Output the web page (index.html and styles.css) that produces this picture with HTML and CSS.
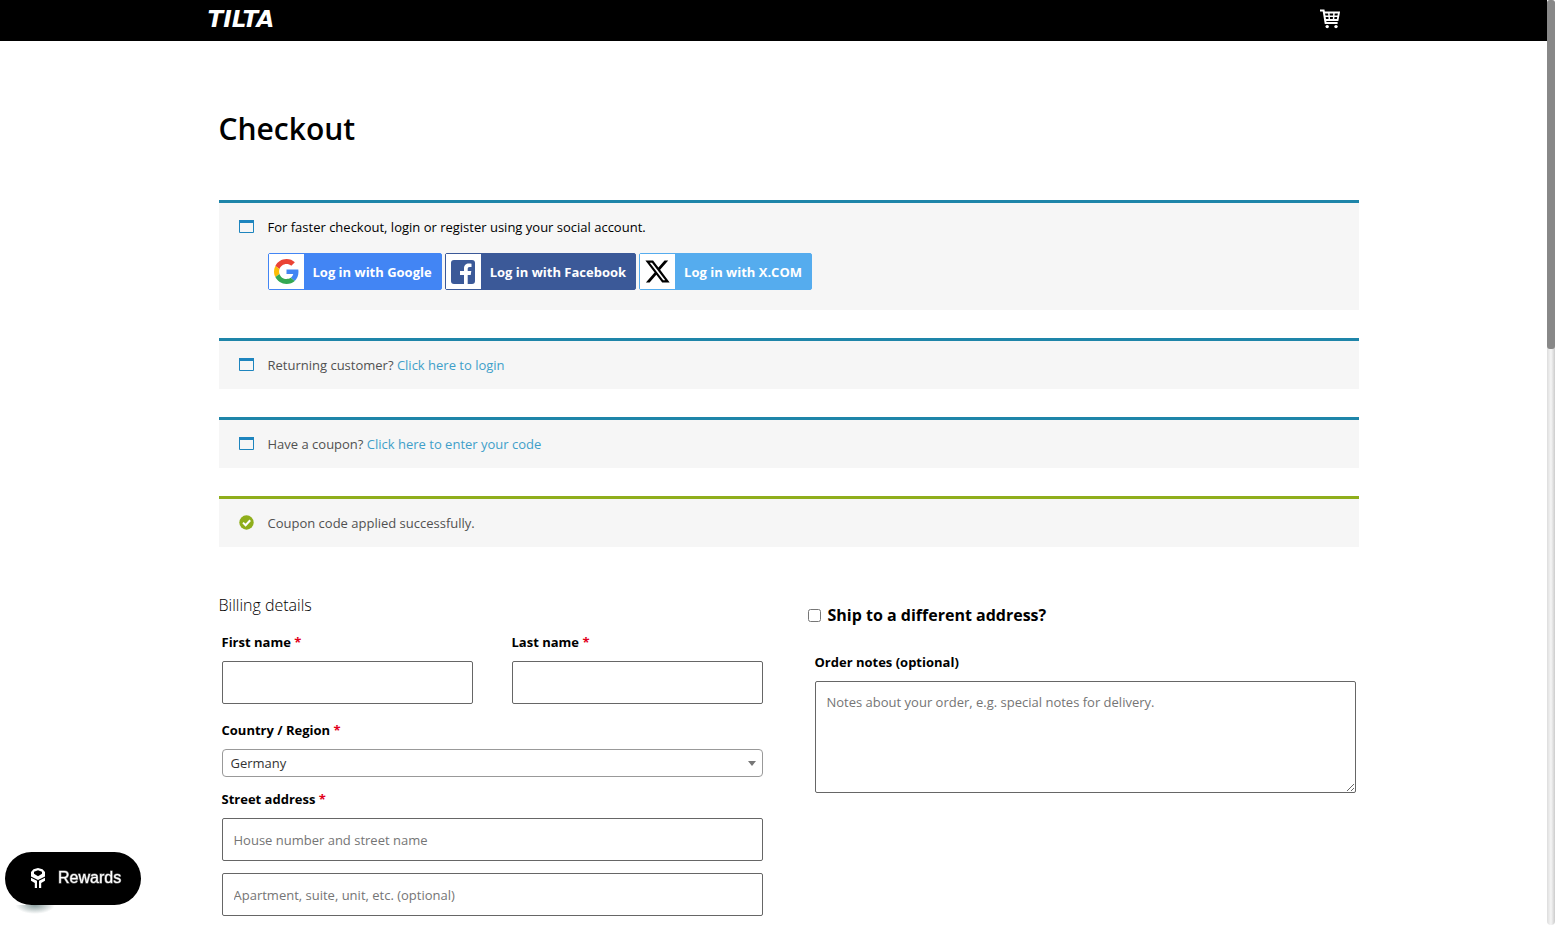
FILE: index.html
```html
<!DOCTYPE html>
<html lang="en">

<head>
    <meta charset="UTF-8" />
    <meta name="viewport" content="width=device-width, initial-scale=1.0" />
    <title>Checkout - Tilta</title>
    <link rel="stylesheet" href="styles.css">
</head>

<body>
    <header class="site-header">
        <div class="header-inner">
            <a href="/" class="logo">TILTA</a>
            <a href="/cart" class="cart-link" aria-label="Cart">
                <svg width="20" height="20" viewBox="0 0 20 20" fill="none" stroke="#fff">
                    <path d="M0 1.5h3.6l2 12.5h12" stroke-width="2" />
                    <path d="M3.8 3.5h15.2l-1.4 7.5H5" stroke-width="1.8" />
                    <path d="M4.4 7.2h14M8.8 3.5l.6 7.5M14 3.5l-.5 7.5" stroke-width="1.5" />
                    <circle cx="7.2" cy="17.6" r="1.7" fill="#fff" stroke="none" />
                    <circle cx="16" cy="17.6" r="1.7" fill="#fff" stroke="none" />
                </svg>
            </a>
        </div>
    </header>

    <main class="page">
        <h1>Checkout</h1>

        <div class="notice notice-social">
            <svg class="notice-icon" width="15" height="15" viewBox="0 0 15 15">
                <path d="M.5 1.5h14v12H.5z" fill="none" stroke="#1e85be" />
                <path d="M0 1h15v3H0z" fill="#1e85be" />
            </svg>
            <div>
                <p>For faster checkout, login or register using your social account.</p>
                <div class="social-buttons">
                    <a href="#google" class="social google">
                        <span class="social-icon">
                            <svg width="25" height="25" viewBox="0 0 48 48">
                                <path fill="#EA4335" d="M24 9.5c3.54 0 6.71 1.22 9.21 3.6l6.85-6.85C35.9 2.38 30.47 0 24 0 14.62 0 6.51 5.38 2.56 13.22l7.98 6.19C12.43 13.72 17.74 9.5 24 9.5z" />
                                <path fill="#4285F4" d="M46.98 24.55c0-1.57-.15-3.09-.38-4.55H24v9.02h12.94c-.58 2.96-2.26 5.48-4.78 7.18l7.73 6c4.51-4.18 7.09-10.36 7.09-17.65z" />
                                <path fill="#FBBC05" d="M10.53 28.59c-.48-1.45-.76-2.99-.76-4.59s.27-3.14.76-4.59l-7.98-6.19C.92 16.46 0 20.12 0 24c0 3.88.92 7.54 2.56 10.78l7.97-6.19z" />
                                <path fill="#34A853" d="M24 48c6.48 0 11.93-2.13 15.89-5.81l-7.73-6c-2.15 1.45-4.92 2.3-8.16 2.3-6.26 0-11.57-4.22-13.47-9.91l-7.98 6.19C6.51 42.62 14.62 48 24 48z" />
                            </svg>
                        </span>
                        Log in with Google
                    </a>
                    <a href="#facebook" class="social facebook">
                        <span class="social-icon">
                            <svg width="26" height="26" viewBox="0 0 26 26">
                                <rect x="1" y="1" width="24" height="24" rx="3" fill="#3b5998" />
                                <path fill="#fff" d="M14 25v-9h-4v-4h4V9.5C14 6 16 4.500 18.800 4.500c1 0 2 .1 2.700.2V8h-1.800c-1.600 0-2 .8-2 2v2h3.600l-.6 4h-3v9z" />
                            </svg>
                        </span>
                        Log in with Facebook
                    </a>
                    <a href="#x" class="social xcom">
                        <span class="social-icon">
                            <svg width="27" height="27" viewBox="0 0 24 24">
                                <path d="M18.244 2.250h3.308l-7.227 8.260 8.502 11.240H16.170l-5.214-6.817L4.990 21.750H1.680l7.730-8.835L1.254 2.250H8.080l4.713 6.231zm-1.161 17.520h1.833L7.084 4.126H5.117z" />
                            </svg>
                        </span>
                        Log in with X.COM
                    </a>
                </div>
            </div>
        </div>

        <div class="notice">
            <svg class="notice-icon" width="15" height="15" viewBox="0 0 15 15">
                <path d="M.5 1.5h14v12H.5z" fill="none" stroke="#1e85be" />
                <path d="M0 1h15v3H0z" fill="#1e85be" />
            </svg>
            <p>Returning customer? <a href="#login">Click here to login</a></p>
        </div>

        <div class="notice">
            <svg class="notice-icon" width="15" height="15" viewBox="0 0 15 15">
                <path d="M.5 1.5h14v12H.5z" fill="none" stroke="#1e85be" />
                <path d="M0 1h15v3H0z" fill="#1e85be" />
            </svg>
            <p>Have a coupon? <a href="#coupon">Click here to enter your code</a></p>
        </div>

        <div class="notice notice-success">
            <svg class="notice-icon" width="15" height="15" viewBox="0 0 15 15">
                <circle cx="7.5" cy="7.5" r="7.2" fill="#8fae1b" />
                <path d="M4 7.6l2.600 2.600 4.600-5" fill="none" stroke="#fff" stroke-width="2" />
            </svg>
            <p>Coupon code applied successfully.</p>
        </div>

        <form class="checkout">
            <div class="billing">
                <h3>Billing details</h3>
                <div class="name-row">
                    <div class="form-row">
                        <label for="first-name">First name <span class="required">*</span></label>
                        <input type="text" id="first-name">
                    </div>
                    <div class="form-row">
                        <label for="last-name">Last name <span class="required">*</span></label>
                        <input type="text" id="last-name">
                    </div>
                </div>
                <div class="form-row select-row">
                    <label for="country">Country / Region <span class="required">*</span></label>
                    <div class="select-wrap">
                        <select id="country">
                            <option>Germany</option>
                        </select>
                    </div>
                </div>
                <div class="form-row">
                    <label for="street">Street address <span class="required">*</span></label>
                    <input type="text" id="street" placeholder="House number and street name">
                    <input type="text" id="street2" aria-label="Apartment" placeholder="Apartment, suite, unit, etc. (optional)">
                </div>
            </div>

            <div class="shipping">
                <h3 class="ship-toggle">
                    <input type="checkbox" id="ship-different">
                    <label for="ship-different">Ship to a different address?</label>
                </h3>
                <div class="form-row">
                    <label for="notes">Order notes (optional)</label>
                    <textarea id="notes" placeholder="Notes about your order, e.g. special notes for delivery."></textarea>
                </div>
            </div>
        </form>
    </main>

    <button type="button" class="rewards">
        <svg width="16" height="20" viewBox="0 0 16 20">
            <path fill="#fff" fill-rule="evenodd" d="M8 0l4.500 1.200L15 4v4.500L8 12 1 8.500V4l2.500-2.800zM8 2.200L4 3.800v2L8 8.200l4-2.400v-2z" />
            <path fill="#fff" d="M1 9.800l6 3V20H4.800v-5L1 12.800zM15 9.800l-6 3V20h2.200v-5L15 12.800z" />
        </svg>
        Rewards
    </button>

    <div class="scrollbar">
        <div class="scrollbar-thumb"></div>
    </div>
</body>

</html>
```
FILE: styles.css
```css
* {
    box-sizing: border-box;
}

html {
    scrollbar-width: none;
}

body {
    font-family: 'Segoe UI', 'Open Sans', 'Noto Sans', sans-serif;
    font-size: 13px;
    line-height: 24px;
    margin: 0;
    padding-right: 8px;
    background-color: #fff;
    color: #000;
}

a {
    color: #3f9fc9;
    text-decoration: none;
}

p {
    margin: 0;
}

.site-header {
    background-color: #000;
}

.header-inner {
    display: flex;
    justify-content: space-between;
    align-items: center;
    max-width: 1132px;
    height: 41px;
    margin: 0 auto;
    padding-bottom: 4px;
}

.logo {
    color: #fff;
    font-family: 'DejaVu Sans', sans-serif;
    font-size: 23px;
    font-weight: bold;
    font-style: italic;
}

.cart-link {
    display: flex;
}

.page {
    max-width: 1170px;
    margin: 0 auto;
    padding: 68px 0 9px 30px;
}

h1 {
    margin: 0 0 51px;
    font-size: 30px;
    font-weight: 600;
    line-height: 40px;
}

h3 {
    margin: 0;
    font-size: 16px;
    line-height: 24px;
}

.notice {
    display: flex;
    gap: 14px;
    margin-bottom: 28px;
    padding: 12px 20px;
    background-color: #f6f6f6;
    border-top: 3px solid #1e85a9;
    color: #515151;
}

.notice-icon {
    flex: none;
    margin-top: 4px;
}

.notice-social {
    padding-bottom: 20px;
    color: #000;
}

.notice-success {
    margin-bottom: 46px;
    border-top-color: #8fae1b;
}

.social-buttons {
    display: flex;
    flex-wrap: wrap;
    gap: 3px;
    margin-top: 14px;
}

.social {
    display: flex;
    align-items: center;
    gap: 9px;
    height: 37px;
    padding-right: 9px;
    border: 1px solid;
    border-radius: 2px;
    color: #fff;
    font-weight: bold;
}

.social-icon {
    display: flex;
    align-items: center;
    justify-content: center;
    width: 35px;
    height: 35px;
    background-color: #fff;
}

.google {
    background-color: #4285f4;
    border-color: #4285f4;
}

.facebook {
    background-color: #3b5998;
    border-color: #3b5998;
}

.xcom {
    background-color: #55acee;
    border-color: #55acee;
}

/* billing and shipping columns */
.checkout {
    display: grid;
    grid-template-columns: 1fr 1fr;
    gap: 46px;
}

.billing h3 {
    margin-bottom: 13px;
    font-weight: 300;
}

.name-row {
    display: grid;
    grid-template-columns: 1fr 1fr;
    gap: 33px;
}

.form-row {
    margin-bottom: 14px;
    padding: 0 3px;
}

.form-row label {
    display: block;
    margin-bottom: 7px;
    font-weight: bold;
}

.required {
    color: #e2001a;
}

.form-row input,
.form-row textarea {
    display: block;
    width: 100%;
    height: 43px;
    padding: 0 11px;
    border: 1px solid #666;
    border-radius: 2px;
    background-color: #fff;
    font-family: inherit;
    font-size: 13px;
}

.form-row input + input {
    margin-top: 12px;
}

.form-row textarea {
    height: 112px;
    padding: 8px 11px;
    line-height: 24px;
}

::placeholder {
    color: #757575;
}

.select-row {
    margin-bottom: 10px;
}

.select-wrap {
    position: relative;
}

.select-wrap::after {
    content: "";
    position: absolute;
    top: 12px;
    right: 7px;
    border: 4px solid transparent;
    border-top: 5px solid #777;
    border-bottom: 0;
    pointer-events: none;
}

select {
    display: block;
    width: 100%;
    height: 28px;
    padding: 0 8px;
    appearance: none;
    border: 1px solid #999;
    border-radius: 4px;
    background-color: #fff;
    color: #333;
    font-family: inherit;
    font-size: 13px;
}

.shipping {
    padding-top: 10px;
}

.ship-toggle {
    display: flex;
    align-items: center;
    gap: 7px;
    margin: 0 0 23px -4px;
}

.ship-toggle input {
    width: 13px;
    height: 13px;
    margin: 0;
}

.rewards {
    position: fixed;
    left: 5px;
    bottom: 20px;
    display: flex;
    align-items: center;
    gap: 12px;
    height: 53px;
    padding: 0 20px 2px 25px;
    border: 0;
    border-radius: 27px;
    background-color: #000;
    color: #fff;
    font-family: 'Liberation Sans', Arial, sans-serif;
    font-size: 16px;
    -webkit-text-stroke: 1px #fff;
    paint-order: stroke;
    -webkit-text-stroke-color: rgba(255, 255, 255, 0.5);
}

/* soft shadow under the left end of the pill */
.rewards::after {
    content: "";
    position: absolute;
    top: 100%;
    left: 10px;
    width: 40px;
    height: 9px;
    background: radial-gradient(ellipse at top, rgba(20, 60, 60, 0.5), transparent 70%);
}

.scrollbar {
    position: fixed;
    top: 0;
    right: 0;
    bottom: 0;
    width: 8px;
    border-radius: 4px;
    background: linear-gradient(to right, #ddd, #f5f5f5 50%, #ccc);
}

.scrollbar-thumb {
    height: 349px;
    border-radius: 3px;
    background-color: #888;
}

@media (max-width: 800px) {
    .page {
        padding: 32px 16px;
    }

    .checkout {
        grid-template-columns: 1fr;
    }
}
```
